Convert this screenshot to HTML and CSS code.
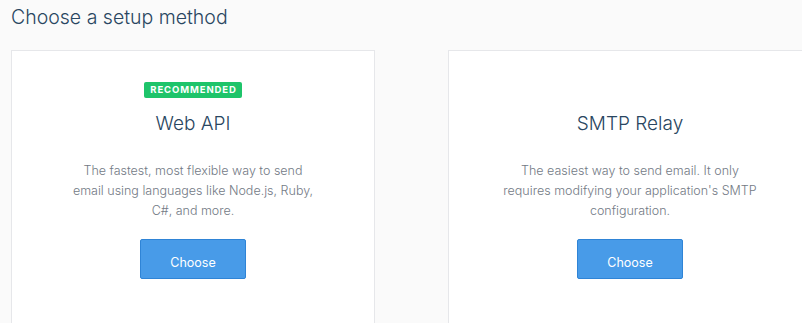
FILE: index.html
```html
<!DOCTYPE html>
<html lang="en">
<head>
    <meta charset="UTF-8">
    <title>Choose a setup method</title>
    <link rel="stylesheet" href="styles.css">
</head>
<body>

<h1 class="page-title">Choose a setup method</h1>

<div class="methods">
    <div class="method-card">
        <div class="badge-slot"><span class="badge">Recommended</span></div>
        <h2 class="method-title">Web API</h2>
        <p class="method-desc">The fastest, most flexible way to send<br>email using languages like Node.js, Ruby,<br>C#, and more.</p>
        <button class="btn-choose">Choose</button>
    </div>
    <div class="method-card">
        <div class="badge-slot"></div>
        <h2 class="method-title">SMTP Relay</h2>
        <p class="method-desc">The easiest way to send email. It only<br>requires modifying your application's SMTP<br>configuration.</p>
        <button class="btn-choose">Choose</button>
    </div>
</div>

</body>
</html>
```

FILE: styles.css
```css
body {
    margin: 0;
    padding: 0 0 0 11px;
    background-color: #fafafa;
    font-family: Inter, "Open Sans", sans-serif;
    color: #294661;
}

.page-title {
    margin: 0;
    padding-top: 5px;
    height: 45px;
    font-size: 19.5px;
    font-weight: 300;
    line-height: 24px;
    color: #294661;
}

.methods {
    display: flex;
    gap: 73px;
    overflow: hidden;
}

.method-card {
    flex-shrink: 0;
    width: 362px;
    height: 272px;
    background-color: #fff;
    border: 1px solid #e6e7ea;
    border-bottom: none;
    display: flex;
    flex-direction: column;
    align-items: center;
    text-align: center;
}

.badge-slot {
    height: 16px;
    margin-top: 26px;
}

.badge {
    display: inline-block;
    background-color: #1ec46a;
    color: #fff;
    font-size: 9.5px;
    font-weight: 700;
    letter-spacing: 0.9px;
    text-transform: uppercase;
    line-height: 16px;
    padding: 0 5px 0 6px;
    border-radius: 2px;
}

.method-title {
    margin: 18px 0 0;
    font-size: 19px;
    font-weight: 300;
    line-height: 26px;
    color: #294661;
}

.method-desc {
    margin: 24px 0 0;
    width: 300px;
    font-size: 12.5px;
    font-weight: 300;
    line-height: 20px;
    color: #737a85;
}

.btn-choose {
    margin-top: 18px;
    width: 106px;
    height: 40px;
    padding: 6px 0 0;
    background-color: #489be8;
    border: 1px solid #2f84d6;
    border-radius: 2px;
    color: #fff;
    font-family: Inter, "Open Sans", sans-serif;
    font-size: 12.5px;
}
```
